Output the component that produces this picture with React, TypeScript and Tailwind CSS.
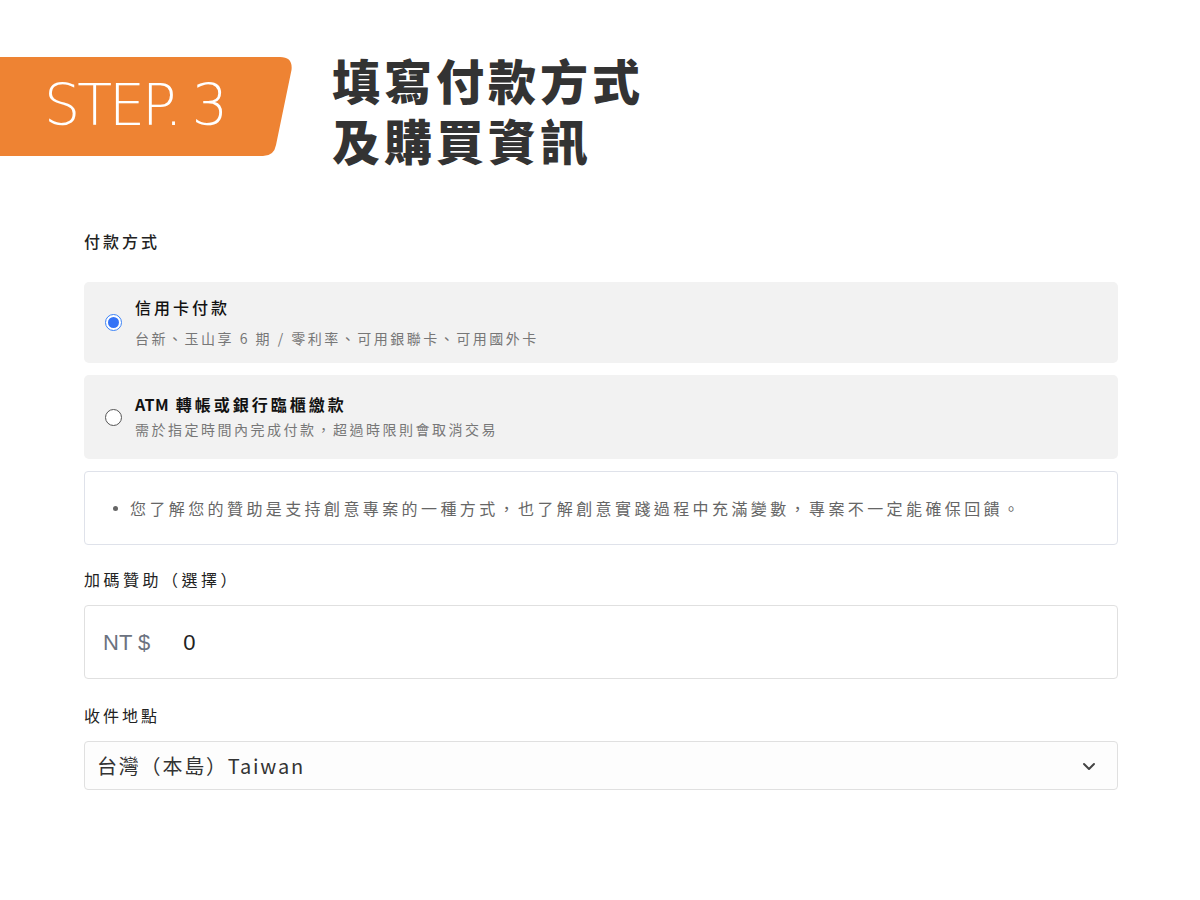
import { useState } from 'react';

const cjk = '"Noto Sans CJK TC", "Noto Sans", sans-serif';
const latin = '"Liberation Sans", "Noto Sans CJK TC", sans-serif';

export default function App() {
  const [method, setMethod] = useState('card');

  return (
    <div className="min-h-screen w-[1200px] bg-white" style={{ fontFamily: cjk }}>
      {/* Step header */}
      <div className="flex items-start pt-[57px]">
        <div className="relative h-[99px] w-[294px] shrink-0">
          <svg className="absolute inset-0" width="294" height="99" viewBox="0 0 294 99">
            <path d="M0 0 H280 Q293 0 291.5 13 L276 88 Q274 99 263 99 H0 Z" fill="#ee8333" />
          </svg>
          <div
            className="relative flex h-full items-center pl-[44px] pb-[2px] text-[57px] text-white"
            style={{ fontFamily: '"DejaVu Sans", sans-serif', fontWeight: 200 }}
          >
            <span className="tracking-[-3px]">STEP.</span>
            <span className="ml-[12px]">3</span>
          </div>
        </div>
        <h1 className="ml-[38px] -mt-[8px] text-[48px] font-black tracking-[4px] text-[#333333]">
          <div className="h-[60px] leading-[60px]">填寫付款方式</div>
          <div className="h-[60px] leading-[60px]">及購買資訊</div>
        </h1>
      </div>

      <div className="ml-[84px] mr-[82px] mt-[60px]">
        <div className="text-[16px] font-medium tracking-[3px] text-[#222]">付款方式</div>

        {/* Payment options */}
        <div className="mt-[29px] flex flex-col gap-[12px]">
          <label className="flex h-[81px] cursor-pointer items-center rounded-[5px] bg-[#f2f2f2] pl-[21px]" onClick={() => setMethod('card')}>
            <Radio checked={method === 'card'} />
            <div className="ml-[13px] mt-[-1px]">
              <div className="text-[16px] font-medium leading-[22px] tracking-[3px] text-[#111]">信用卡付款</div>
              <div className="mt-[10px] text-[14px] leading-[20px] tracking-[2.5px] text-[#777]">台新、玉山享 6 期 / 零利率、可用銀聯卡、可用國外卡</div>
            </div>
          </label>
          <label className="flex h-[84px] cursor-pointer items-center rounded-[5px] bg-[#f2f2f2] pl-[21px]" onClick={() => setMethod('atm')}>
            <Radio checked={method === 'atm'} />
            <div className="ml-[13px] mt-[-3px]">
              <div className="text-[16px] font-bold leading-[22px] tracking-[3px] text-[#111]">
                <span className="tracking-[0.5px]">ATM</span> 轉帳或銀行臨櫃繳款
              </div>
              <div className="mt-[4px] text-[14px] leading-[20px] tracking-[2.5px] text-[#777]">需於指定時間內完成付款，超過時限則會取消交易</div>
            </div>
          </label>
        </div>

        {/* Notice */}
        <div className="mt-[12px] flex h-[74px] items-center rounded-[4px] border border-[#dfe2ea] pl-[28px]">
          <span className="mr-[12px] h-[5px] w-[5px] shrink-0 rounded-full bg-[#666]" />
          <span className="text-[16px] tracking-[3.4px] text-[#666]">您了解您的贊助是支持創意專案的一種方式，也了解創意實踐過程中充滿變數，專案不一定能確保回饋。</span>
        </div>

        <div className="mt-[22px] text-[16px] tracking-[3.5px] text-[#222]">加碼贊助（選擇）</div>
        <div className="mt-[14px] flex h-[74px] items-center rounded-[4px] border border-[#e0e0e0] pl-[18px]">
          <span className="text-[22px] text-[#6b7280]" style={{ fontFamily: latin }}>NT $</span>
          <span className="ml-[33px] text-[22px] text-[#222]" style={{ fontFamily: latin }}>0</span>
        </div>

        <div className="mt-[24px] text-[16px] tracking-[3px] text-[#222]">收件地點</div>
        <div className="mt-[14px] flex h-[49px] items-center justify-between rounded-[4px] border border-[#e0e0e0] bg-[#fdfdfd] pl-[12px] pr-[20px]">
          <span className="text-[20px] tracking-[1.8px] text-[#333]">台灣（本島）Taiwan</span>
          <svg width="16" height="16" viewBox="0 0 16 16" fill="none">
            <path d="M3 6 L8 11 L13 6" stroke="#444" strokeWidth="2" strokeLinecap="round" strokeLinejoin="round" />
          </svg>
        </div>
      </div>
    </div>
  );
}

function Radio({ checked }: { checked: boolean }) {
  return (
    <span
      className={`flex h-[17px] w-[17px] shrink-0 items-center justify-center rounded-full border ${
        checked ? 'border-[#3b82f6] bg-white' : 'border-[#555] bg-white'
      }`}
    >
      {checked && <span className="h-[11px] w-[11px] rounded-full bg-[#3473f6]" />}
    </span>
  );
}
